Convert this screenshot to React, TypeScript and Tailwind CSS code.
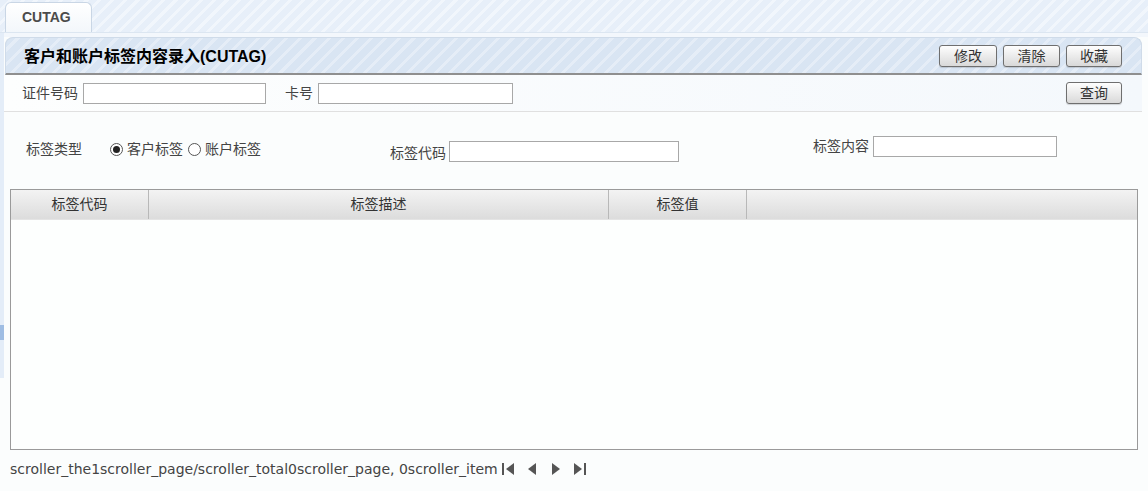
import React from 'react';

const FONT = "font-['Liberation_Sans','Noto_Sans_CJK_SC',sans-serif]";

const Btn: React.FC<{ label: string; w: string }> = ({ label, w }) => (
    <button
        className={`${w} h-[22px] rounded-[3px] border border-[#6f6f6f] bg-gradient-to-b from-[#fefefe] to-[#d9d9d9] text-[14px] leading-none text-[#333] shadow-[0_1px_1px_rgba(0,0,0,0.15)]`}
    >
        {label}
    </button>
);

const Field: React.FC<{ w: string }> = ({ w }) => (
    <div className={`${w} h-[21px] border border-[#a8a8a8] bg-white`} />
);

const Radio: React.FC<{ checked?: boolean }> = ({ checked }) => (
    <span className="flex h-[13px] w-[13px] items-center justify-center rounded-full border border-[#555] bg-white">
        {checked && <span className="h-[7px] w-[7px] rounded-full bg-[#222]" />}
    </span>
);

const NavIcon: React.FC<{ kind: 'first' | 'prev' | 'next' | 'last' }> = ({ kind }) => (
    <svg width="14" height="16" viewBox="0 0 14 16" className="fill-[#555]">
        {kind === 'first' && (
            <>
                <rect x="1" y="2" width="2" height="12" />
                <polygon points="13,2 13,14 5,8" />
            </>
        )}
        {kind === 'prev' && <polygon points="11,2 11,14 3,8" />}
        {kind === 'next' && <polygon points="3,2 3,14 11,8" />}
        {kind === 'last' && (
            <>
                <polygon points="1,2 1,14 9,8" />
                <rect x="11" y="2" width="2" height="12" />
            </>
        )}
    </svg>
);

export default function App() {
    return (
        <div className={`${FONT} h-[491px] w-[1148px] overflow-hidden bg-[#fbfdfd] text-[#333]`}>
            {/* tab strip */}
            <div className="flex h-[33px] items-end border-b border-[#dce6f1] bg-[#e9f1fa] bg-[repeating-linear-gradient(135deg,#e7eff9_0px,#e7eff9_6px,#f1f6fc_6px,#f1f6fc_9px)] pl-[5px]">
                <div className="flex h-[30px] w-[87px] items-center rounded-t-[6px] border border-b-0 border-[#c9d6e5] bg-gradient-to-b from-[#ffffff] to-[#f3f7fb] pl-[16px] text-[14px] font-bold text-[#4b4b4b]">
                    CUTAG
                </div>
            </div>

            <div className="flex">
                {/* left splitter strip */}
                <div className="flex w-[4px] shrink-0 flex-col">
                    <div className="h-[292px] bg-[#e4edf8]" />
                    <div className="h-[15px] bg-[#9fbde3]" />
                    <div className="h-[38px] bg-[#e4edf8]" />
                </div>

                <div className="flex-1">
                    <div className="h-[4px] bg-[#f3f7fc]" />
                    {/* title bar */}
                    <div className="ml-[1px] mr-[6px] flex h-[38px] items-center justify-between rounded-t-[8px] border border-b-2 border-[#cfdbe9] border-b-[#8f8f8f] bg-[#dce7f4] bg-[repeating-linear-gradient(135deg,#d9e5f3_0px,#d9e5f3_7px,#e5edf7_7px,#e5edf7_10px)] pl-[18px] pr-[19px] shadow-[0_1px_0_#cfcfcf]">
                        <span className="mt-[3px] text-[16px] font-bold text-black">客户和账户标签内容录入(CUTAG)</span>
                        <div className="flex gap-[6px]">
                            <Btn label="修改" w="w-[58px]" />
                            <Btn label="清除" w="w-[57px]" />
                            <Btn label="收藏" w="w-[56px]" />
                        </div>
                    </div>

                    {/* query row */}
                    <div className="mr-[6px] flex h-[37px] items-center border-b border-[#e0e0e0] bg-gradient-to-r from-[#fdfefe] to-[#f4f8fc] pl-[18px] pr-[20px] text-[14px] text-[#444]">
                        <span className="mr-[5px]">证件号码</span>
                        <Field w="w-[183px]" />
                        <span className="ml-[19px] mr-[5px]">卡号</span>
                        <Field w="w-[195px]" />
                        <div className="flex-1" />
                        <Btn label="查询" w="w-[56px]" />
                    </div>

                    {/* filter row */}
                    <div className="flex h-[77px] items-start text-[14px] text-[#444]">
                        <div className="mt-[27px] flex w-[368px] shrink-0 items-center pl-[22px]">
                            <span className="mr-[28px]">标签类型</span>
                            <Radio checked />
                            <span className="ml-[4px] mr-[5px]">客户标签</span>
                            <Radio />
                            <span className="ml-[4px]">账户标签</span>
                        </div>
                        <div className="mt-[27px] flex w-[441px] shrink-0 items-center pl-[18px]">
                            <span className="mr-[3px] mt-[4px]">标签代码</span>
                            <Field w="w-[230px]" />
                        </div>
                        <div className="mt-[24px] flex items-center">
                            <span className="mr-[4px]">标签内容</span>
                            <Field w="w-[184px]" />
                        </div>
                    </div>

                    {/* grid */}
                    <div className="ml-[6px] mr-[10px] flex h-[261px] flex-col border border-[#9a9a9a] bg-[#fdfffe]">
                        <div className="flex h-[30px] shrink-0 border-b border-[#e4e4e4] bg-gradient-to-b from-[#f3f3f3] to-[#dcdcdc] text-[14px] text-[#333]">
                            <div className="flex w-[138px] items-center justify-center border-r border-r-[#b8b8b8]">标签代码</div>
                            <div className="flex w-[460px] items-center justify-center border-r border-r-[#b8b8b8]">标签描述</div>
                            <div className="flex w-[138px] items-center justify-center border-r border-r-[#b8b8b8]">标签值</div>
                            <div className="flex-1" />
                        </div>
                        <div className="flex-1" />
                    </div>

                    {/* pager */}
                    <div className="ml-[6px] mt-[9px] flex h-[20px] items-center font-['DejaVu_Sans',sans-serif] text-[14px] text-[#444]">
                        <span>scroller_the1scroller_page/scroller_total0scroller_page, 0scroller_item</span>
                        <div className="ml-[3px] flex items-center gap-[10px]">
                            <NavIcon kind="first" />
                            <NavIcon kind="prev" />
                            <NavIcon kind="next" />
                            <NavIcon kind="last" />
                        </div>
                    </div>
                </div>
            </div>
        </div>
    );
}
